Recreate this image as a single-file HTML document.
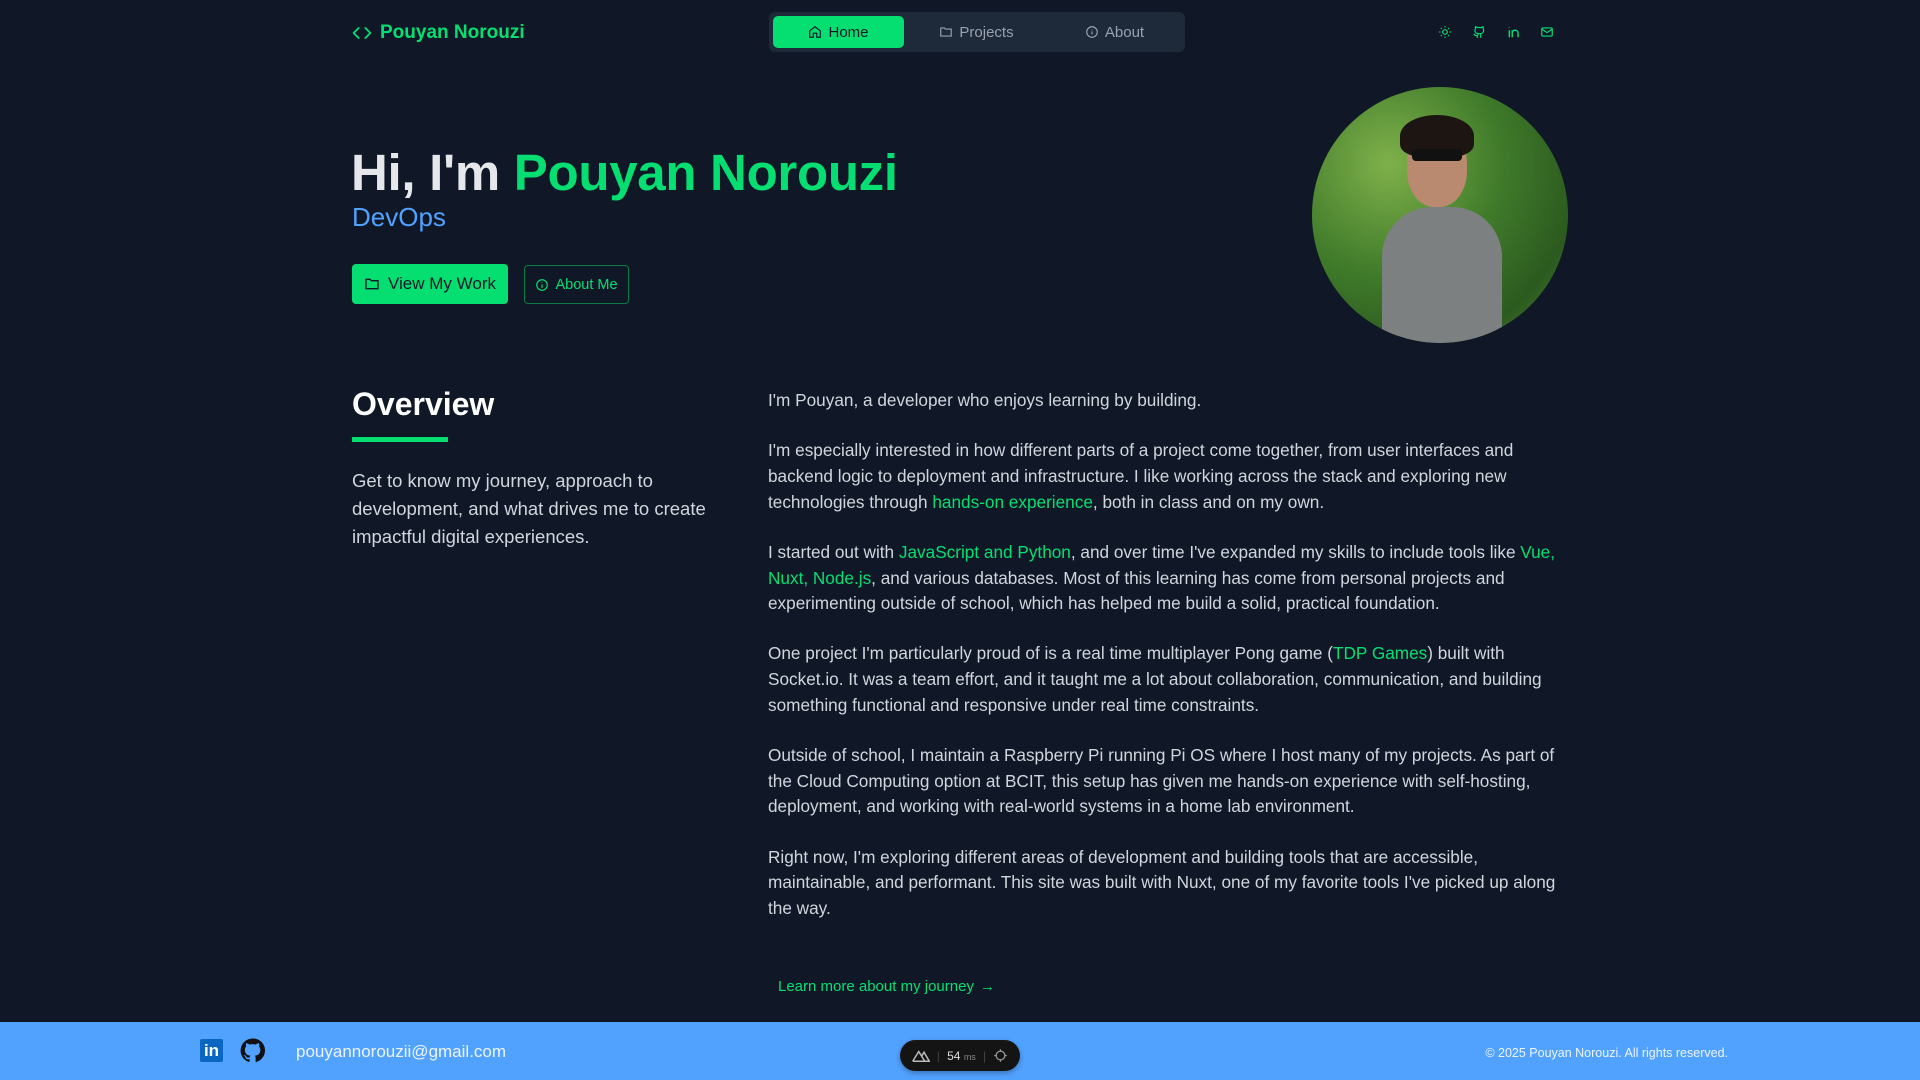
<!DOCTYPE html>
<html><head><meta charset="utf-8"><style>
*{margin:0;padding:0;box-sizing:border-box}
body{width:1920px;height:1080px;background:#101828;font-family:"Liberation Sans",sans-serif;color:#d1d5dc;position:relative;overflow:hidden}
.g{color:#05df72}
.abs{position:absolute}
svg{display:block}
.nav{left:769px;top:12px;width:416px;height:40px;background:#1e2939;border-radius:6px}
.tab{position:absolute;top:4px;height:32px;display:flex;align-items:center;justify-content:center;gap:6px;font-size:15px;color:#99a1af;border-radius:5px}
.rp p{margin-bottom:24.5px}
.rp{left:768px;top:388px;width:800px;font-size:17.2px;line-height:25.7px;color:#d1d5dc}
</style></head><body>
<div class="abs" style="left:352px;top:22px;display:flex;align-items:center;gap:8px;color:#05df72;font-weight:bold;font-size:19px">
<svg width="20" height="20" viewBox="0 0 24 24" fill="none" stroke="#05df72" stroke-width="2.2" stroke-linecap="round" stroke-linejoin="round"><path d="M8 6l-6 6 6 6M16 6l6 6-6 6"/></svg>Pouyan Norouzi</div>
<div class="abs nav">
<div class="tab" style="left:4px;width:131px;background:#05df72;color:#101828"><svg width="14" height="14" viewBox="0 0 24 24" fill="none" stroke="#101828" stroke-width="2"><path d="M3 10l9-7 9 7v11H15v-7H9v7H3z"/></svg>Home</div>
<div class="tab" style="left:140px;width:135px"><svg width="14" height="14" viewBox="0 0 24 24" fill="none" stroke="#99a1af" stroke-width="2"><path d="M3 5h6l2 2h10v12H3z"/></svg>Projects</div>
<div class="tab" style="left:278px;width:135px"><svg width="14" height="14" viewBox="0 0 24 24" fill="none" stroke="#99a1af" stroke-width="2"><circle cx="12" cy="12" r="9"/><path d="M12 8v1M12 11v5"/></svg>About</div>
</div>
<svg class="abs" style="left:1438px;top:25px" width="14" height="14" viewBox="0 0 24 24" fill="none" stroke="#05df72" stroke-width="2"><circle cx="12" cy="12" r="4"/><path d="M12 2v2M12 20v2M2 12h2M20 12h2M5 5l1.5 1.5M17.5 17.5L19 19M5 19l1.5-1.5M17.5 6.5L19 5"/></svg>
<svg class="abs" style="left:1472px;top:25px" width="14" height="14" viewBox="0 0 24 24" fill="none" stroke="#05df72" stroke-width="2"><path d="M9 22v-4c-4 1-5-2-6-3M15 22v-4c0-2 0-2-1-3 3 0 6-2 6-6 0-1-.5-2-1-3 .2-1 .2-2 0-3 0 0-1 0-3 1.5a12 12 0 00-6 0C7 3 6 3 6 3c-.2 1-.2 2 0 3-.5 1-1 2-1 3 0 4 3 6 6 6-1 1-1 2-1 3"/></svg>
<svg class="abs" style="left:1507px;top:25px" width="14" height="14" viewBox="0 0 24 24" fill="none" stroke="#05df72" stroke-width="2.4"><path d="M4 9v12M4 4v1M9 21V9M9 14c0-3 2-5 5-5s5 2 5 5v7"/></svg>
<svg class="abs" style="left:1540px;top:25px" width="14" height="14" viewBox="0 0 24 24" fill="none" stroke="#05df72" stroke-width="2"><rect x="3" y="5" width="18" height="14" rx="2"/><path d="M3 7l9 6 9-6"/></svg>

<div class="abs" style="left:351px;top:143px;font-size:51px;font-weight:bold;color:#e5e7eb;white-space:nowrap;letter-spacing:-0.3px">Hi, I'm <span class="g">Pouyan Norouzi</span></div>
<div class="abs" style="left:352px;top:202px;font-size:26px;color:#51a2ff">DevOps</div>
<div class="abs" style="left:352px;top:264px;width:156px;height:40px;background:#05df72;border-radius:4px;display:flex;align-items:center;justify-content:center;gap:8px;color:#101828;font-size:17px"><svg width="16" height="16" viewBox="0 0 24 24" fill="none" stroke="#101828" stroke-width="2"><path d="M3 5h6l2 2h10v12H3z"/></svg>View My Work</div>
<div class="abs" style="left:524px;top:265px;width:105px;height:39px;border:1px solid #0d7a45;border-radius:4px;display:flex;align-items:center;justify-content:center;gap:6px;color:#05df72;font-size:14.5px"><svg width="14" height="14" viewBox="0 0 24 24" fill="none" stroke="#05df72" stroke-width="2"><circle cx="12" cy="12" r="9"/><path d="M12 7v1M12 11v6"/></svg>About Me</div>

<div class="abs" style="left:1312px;top:87px;width:256px;height:256px;border-radius:50%;overflow:hidden;background:radial-gradient(circle at 30% 30%,#7fb04a,#3f7a2a 45%,#2c5a1f 75%,#4d8a36)">
<div class="abs" style="left:70px;top:120px;width:120px;height:160px;border-radius:50px 50px 0 0;background:#7d8080"></div>
<div class="abs" style="left:95px;top:40px;width:60px;height:80px;border-radius:45%;background:#b98a6f"></div>
<div class="abs" style="left:88px;top:28px;width:74px;height:42px;border-radius:50% 50% 30% 30%;background:#1c1511"></div>
<div class="abs" style="left:100px;top:62px;width:50px;height:12px;background:#111;border-radius:4px"></div>
</div>

<div class="abs" style="left:352px;top:386px;font-size:32px;font-weight:bold;color:#fff">Overview</div>
<div class="abs" style="left:352px;top:437px;width:96px;height:5px;background:#05df72"></div>
<div class="abs" style="left:352px;top:467px;width:380px;font-size:18.5px;line-height:28px;color:#d1d5dc">Get to know my journey, approach to<br>development, and what drives me to create<br>impactful digital experiences.</div>

<div class="abs rp">
<p>I'm Pouyan, a developer who enjoys learning by building.</p>
<p>I'm especially interested in how different parts of a project come together, from user interfaces and<br>backend logic to deployment and infrastructure. I like working across the stack and exploring new<br>technologies through <span class="g">hands-on experience</span>, both in class and on my own.</p>
<p>I started out with <span class="g">JavaScript and Python</span>, and over time I've expanded my skills to include tools like <span class="g">Vue,</span><br><span class="g">Nuxt, Node.js</span>, and various databases. Most of this learning has come from personal projects and<br>experimenting outside of school, which has helped me build a solid, practical foundation.</p>
<p>One project I'm particularly proud of is a real time multiplayer Pong game (<span class="g">TDP Games</span>) built with<br>Socket.io. It was a team effort, and it taught me a lot about collaboration, communication, and building<br>something functional and responsive under real time constraints.</p>
<p>Outside of school, I maintain a Raspberry Pi running Pi OS where I host many of my projects. As part of<br>the Cloud Computing option at BCIT, this setup has given me hands-on experience with self-hosting,<br>deployment, and working with real-world systems in a home lab environment.</p>
<p>Right now, I'm exploring different areas of development and building tools that are accessible,<br>maintainable, and performant. This site was built with Nuxt, one of my favorite tools I've picked up along<br>the way.</p>
</div>
<div class="abs" style="left:778px;top:978px;font-size:15px;color:#05df72;display:flex;align-items:center;gap:6px">Learn more about my journey <span>→</span></div>

<div class="abs" style="left:0;top:1022px;width:1920px;height:58px;background:#51a2ff"></div>
<div class="abs" style="left:200px;top:1039px;width:23px;height:23px;background:#0a66c2;border-radius:2px;color:#fff;font-weight:bold;font-size:17px;line-height:23px;text-align:center">in</div>
<svg class="abs" style="left:240px;top:1038px" width="25" height="25" viewBox="0 0 24 24"><path fill="#111" d="M12 .5a11.5 11.5 0 00-3.6 22.4c.6.1.8-.3.8-.6v-2c-3.2.7-3.9-1.5-3.9-1.5-.5-1.3-1.3-1.7-1.3-1.7-1-.7.1-.7.1-.7 1.2.1 1.8 1.2 1.8 1.2 1 1.8 2.7 1.3 3.4 1 .1-.8.4-1.3.7-1.6-2.6-.3-5.300-1.3-5.3-5.7 0-1.3.5-2.3 1.2-3.1-.1-.3-.5-1.5.1-3.1 0 0 1-.3 3.2 1.2a11 11 0 015.8 0c2.2-1.5 3.2-1.2 3.2-1.2.6 1.6.2 2.8.1 3.1.7.8 1.2 1.8 1.2 3.1 0 4.4-2.7 5.4-5.3 5.7.4.4.8 1.1.8 2.2v3.2c0 .3.2.7.8.6A11.5 11.5 0 0012 .5z"/></svg>
<div class="abs" style="left:296px;top:1042px;font-size:17px;color:#eef4ff">pouyannorouzii@gmail.com</div>
<div class="abs" style="left:900px;top:1040px;width:120px;height:31px;background:#141414;border-radius:16px;box-shadow:0 2px 6px rgba(0,0,0,.3);display:flex;align-items:center;justify-content:space-around;padding:0 8px;color:#ddd;font-size:12px">
<svg width="18" height="14" viewBox="0 0 24 18" fill="none" stroke="#bbb" stroke-width="2"><path d="M1 16L9 3l8 13H1M13 9l3-5 7 12h-6"/></svg><span style="color:#444">|</span><span>54 <span style="font-size:9px;color:#888">ms</span></span><span style="color:#444">|</span>
<svg width="15" height="15" viewBox="0 0 24 24" fill="none" stroke="#999" stroke-width="2"><circle cx="12" cy="12" r="7"/><path d="M12 2v4M12 18v4M2 12h4M18 12h4"/></svg></div>
<div class="abs" style="right:192px;top:1046px;font-size:12.5px;color:#eef4ff">© 2025 Pouyan Norouzi. All rights reserved.</div>
</body></html>
